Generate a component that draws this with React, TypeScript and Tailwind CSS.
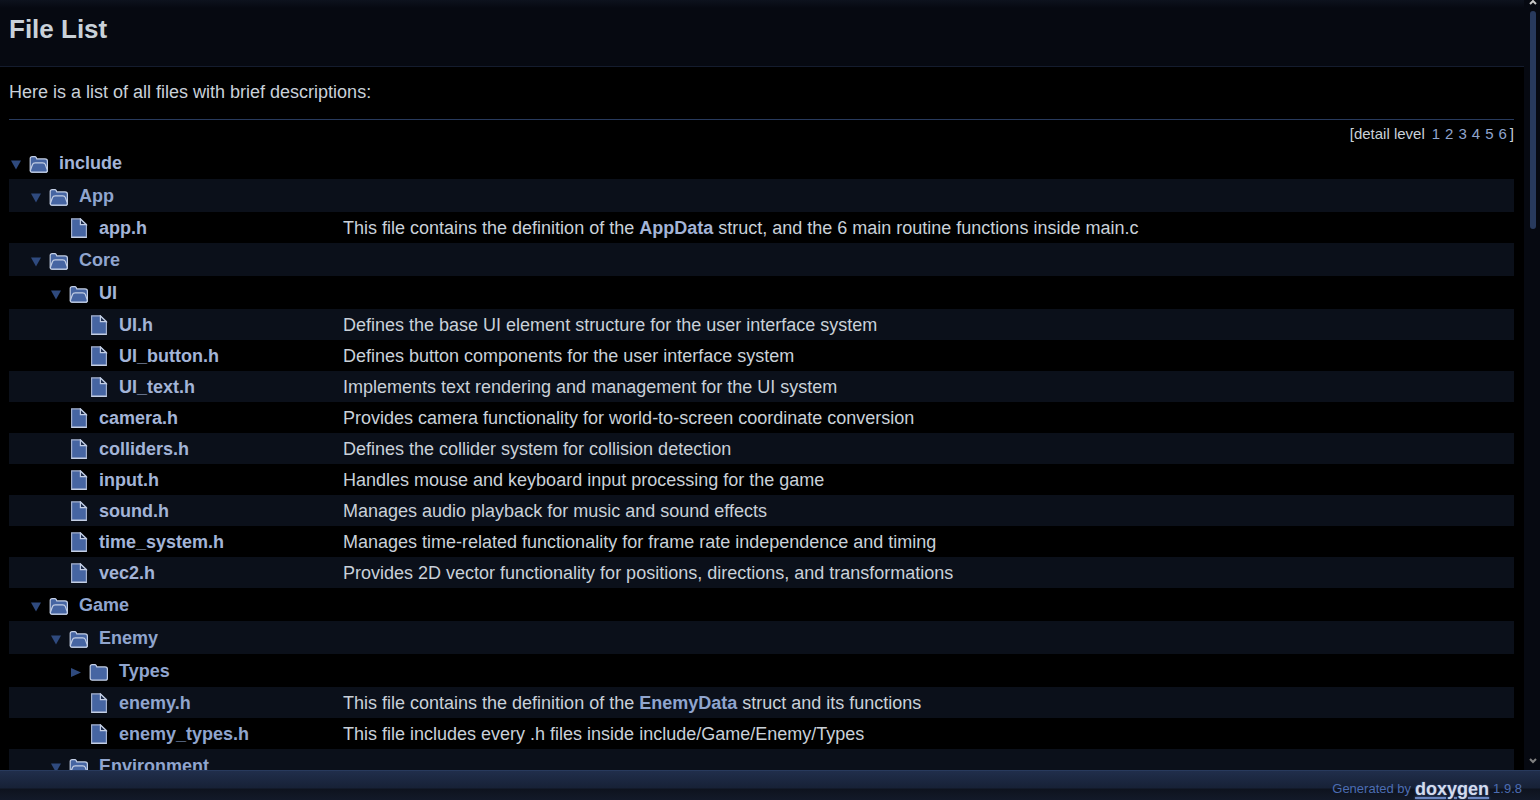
import type { ReactNode } from 'react';

type Entry = {
  name: string;
  depth: number;
  kind: 'open' | 'closed' | 'file';
  visited?: boolean;
  desc?: ReactNode;
};

const visitedLink = 'font-bold text-[#a3b4d7] hover:underline';
const plainLink = 'font-bold text-[#90a5ce] hover:underline';

const entries: Entry[] = [
  { name: 'include', depth: 0, kind: 'open', visited: true },
  { name: 'App', depth: 1, kind: 'open' },
  {
    name: 'app.h',
    depth: 2,
    kind: 'file',
    visited: true,
    desc: (
      <>
        This file contains the definition of the <a href="#AppData" className={visitedLink}>AppData</a> struct, and the 6 main
        routine functions inside main.c
      </>
    ),
  },
  { name: 'Core', depth: 1, kind: 'open' },
  { name: 'UI', depth: 2, kind: 'open', visited: true },
  { name: 'UI.h', depth: 3, kind: 'file', visited: true, desc: 'Defines the base UI element structure for the user interface system' },
  { name: 'UI_button.h', depth: 3, kind: 'file', visited: true, desc: 'Defines button components for the user interface system' },
  { name: 'UI_text.h', depth: 3, kind: 'file', visited: true, desc: 'Implements text rendering and management for the UI system' },
  { name: 'camera.h', depth: 2, kind: 'file', visited: true, desc: 'Provides camera functionality for world-to-screen coordinate conversion' },
  { name: 'colliders.h', depth: 2, kind: 'file', visited: true, desc: 'Defines the collider system for collision detection' },
  { name: 'input.h', depth: 2, kind: 'file', visited: true, desc: 'Handles mouse and keyboard input processing for the game' },
  { name: 'sound.h', depth: 2, kind: 'file', visited: true, desc: 'Manages audio playback for music and sound effects' },
  { name: 'time_system.h', depth: 2, kind: 'file', visited: true, desc: 'Manages time-related functionality for frame rate independence and timing' },
  { name: 'vec2.h', depth: 2, kind: 'file', visited: true, desc: 'Provides 2D vector functionality for positions, directions, and transformations' },
  { name: 'Game', depth: 1, kind: 'open' },
  { name: 'Enemy', depth: 2, kind: 'open' },
  { name: 'Types', depth: 3, kind: 'closed' },
  {
    name: 'enemy.h',
    depth: 3,
    kind: 'file',
    desc: (
      <>
        This file contains the definition of the <a href="#EnemyData" className={plainLink}>EnemyData</a> struct and its functions
      </>
    ),
  },
  { name: 'enemy_types.h', depth: 3, kind: 'file', desc: 'This file includes every .h files inside include/Game/Enemy/Types' },
  { name: 'Environment', depth: 2, kind: 'open' },
];

const indents = ['pl-0', 'pl-5', 'pl-10', 'pl-15'];

function FolderIcon({ open }: { open: boolean }) {
  return (
    <svg viewBox="0 0 20 22" className="h-[22px] w-5 shrink-0" fill="#4665a2" stroke="#c4cfe5" strokeWidth="1.2" strokeLinejoin="round" aria-hidden="true">
      <path d="M1.2 18.2V6.6Q1.2 4.6 3.2 4.6H5.8Q6.8 4.6 7.2 5.6L7.8 6.9H16Q18.4 6.9 18.4 9V18.2Q18.4 20.2 16.4 20.2H3.2Q1.2 20.2 1.2 18.2Z" />
      {open && <path d="M1.5 18L3.4 12.8Q4 10.9 6.4 10.9H13.6Q15.8 10.9 16.4 12.6L18.2 17.8Q18.6 20.2 16.4 20.2H3.2Q1 20.2 1.5 18Z" />}
    </svg>
  );
}

function FileIcon() {
  return (
    <svg viewBox="0 0 20 20" className="size-5 shrink-0" fill="#4665a2" strokeWidth="1.2" aria-hidden="true">
      <path d="M2.6 0.8H11.4L17.4 6.6V19.2H2.6Z" stroke="#a3b0cc" />
      <path d="M11.4 1V6.6H17.2Z" fill="#1c2b4a" stroke="#c4cfe5" />
      <path d="M2.2 19.4H17.8" stroke="#c4cfe5" />
    </svg>
  );
}

function Row({ entry, shaded }: { entry: Entry; shaded: boolean }) {
  const isFile = entry.kind === 'file';
  return (
    <tr className={`${isFile ? 'h-[31px]' : 'h-[33px]'} ${shaded ? 'bg-[#0b101a]' : ''}`}>
      <td className="p-0 whitespace-nowrap">
        <div className={`flex items-center ${indents[entry.depth]}`}>
          {isFile ? (
            <>
              <span className="w-5" />
              <FileIcon />
            </>
          ) : (
            <>
              <button type="button" aria-label={`Toggle ${entry.name}`} className="flex w-5 items-center text-[#2f4a7e]">
                <svg viewBox="0 0 14 16" className="h-4 w-[14px]" fill="currentColor" aria-hidden="true">
                  {entry.kind === 'open' ? <path d="M2 5.5H12L7 14.5Z" /> : <path d="M2 5V14L12 9.5Z" />}
                </svg>
              </button>
              <FolderIcon open={entry.kind === 'open'} />
            </>
          )}
          <a href={`#${entry.name}`} className={`ml-[10px] ${entry.visited ? visitedLink : plainLink}`}>
            {entry.name}
          </a>
        </div>
      </td>
      <td className="p-0 whitespace-nowrap">{entry.desc}</td>
    </tr>
  );
}

export default function App() {
  return (
    <div className="flex h-screen flex-col overflow-hidden bg-black font-['Liberation_Sans',Arial,sans-serif] text-[18px] leading-[22px] text-[#c9d1d9]">
      <div className="flex min-h-0 flex-1">
        <main className="min-w-0 flex-1 overflow-hidden">
          <header className="h-[67px] border-b border-[#141c2e] bg-[linear-gradient(to_bottom,#0d121d_0px,#060911_8px)] px-[9px] pt-[14px]">
            <h1 className="text-[26px] leading-[30px] font-bold">File List</h1>
          </header>
          <div className="pr-[10px] pl-[9px]">
            <p className="pt-[14px] pb-4">Here is a list of all files with brief descriptions:</p>
            <div className="flex h-[27px] items-center justify-end border-t border-[#283a5d] pt-[2px] text-[15px]">
              <span className="mr-[7px]">[detail level</span>
              <span className="flex gap-[5px] text-[#90a5ce]">
                {[1, 2, 3, 4, 5, 6].map((n) => (
                  <button key={n} type="button">{n}</button>
                ))}
              </span>
              <span className="ml-[3px]">]</span>
            </div>
            <table className="w-full table-fixed border-collapse">
              <colgroup>
                <col className="w-[334px]" />
                <col />
              </colgroup>
              <tbody>
                {entries.map((entry, i) => (
                  <Row key={entry.name} entry={entry} shaded={i % 2 === 1} />
                ))}
              </tbody>
            </table>
          </div>
        </main>
        <aside aria-hidden="true" className="flex w-4 shrink-0 flex-col items-center justify-between bg-[#060911] pl-px">
          <div className="flex flex-col items-center">
            <svg viewBox="0 0 8 11" className="h-[11px] w-2" fill="none" stroke="#c8c8c8" strokeWidth="2">
              <path d="M1 4L4 1L7 4" />
            </svg>
            <div className="h-[218px] w-[6px] rounded-full bg-[#283a5d]" />
          </div>
          <svg viewBox="0 0 8 12" className="h-3 w-2" fill="none" stroke="#808080" strokeWidth="2">
            <path d="M1 1L4 4L7 1" />
          </svg>
        </aside>
      </div>
      <footer className="flex h-[30px] shrink-0 items-center justify-end gap-1 border-t border-[#283a5d] bg-[linear-gradient(to_bottom,#202e4b_0px,#172136_17px,#0e131e_18px,#131a2a_30px)] pt-[7px] pr-[18px] text-[13px] text-[#4c6db3]">
        <span>Generated by</span>
        <a
          href="#doxygen"
          className="text-[18px] leading-5 font-bold text-[#d3dbec] underline decoration-[#6a86c0] decoration-2 underline-offset-2 [text-shadow:0_0_2px_#4665a2]"
        >
          doxygen
        </a>
        <span>1.9.8</span>
      </footer>
    </div>
  );
}
